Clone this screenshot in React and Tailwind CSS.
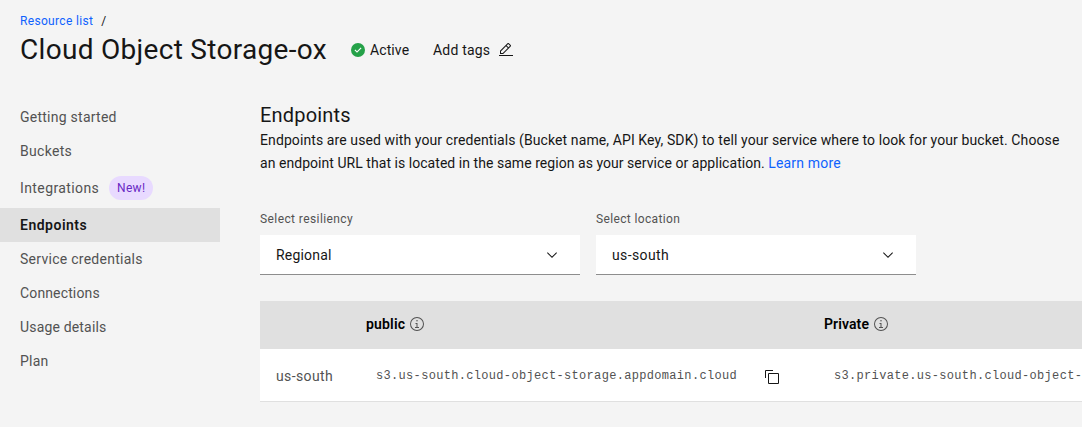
function InfoIcon() {
  return (
    <svg className="size-4 shrink-0" viewBox="0 0 32 32" fill="#525252">
      <path d="M17 22v-8h-4v2h2v6h-3v2h8v-2zM16 8a1.5 1.5 0 1 0 1.5 1.5A1.5 1.5 0 0 0 16 8z" />
      <path d="M16 30a14 14 0 1 1 14-14 14 14 0 0 1-14 14zm0-26a12 12 0 1 0 12 12A12 12 0 0 0 16 4z" />
    </svg>
  );
}

function EditIcon() {
  return (
    <svg className="size-4 shrink-0" viewBox="0 0 32 32" fill="#161616">
      <path d="M2 26h28v2H2zM25.4 9c.8-.8.8-2 0-2.8l-3.6-3.6c-.8-.8-2-.8-2.8 0l-15 15V24h6.4l15-15zm-5-5L24 7.6l-3 3L17.4 7l3-3zM6 22v-3.6l10-10 3.6 3.6-10 10H6z" />
    </svg>
  );
}

function CheckIcon() {
  return (
    <svg className="size-4 shrink-0" viewBox="0 0 16 16">
      <circle cx="8" cy="8" r="7" fill="#24a148" />
      <path d="M7 10.8 4.5 8.3l.8-.8L7 9.2l3.7-3.7.8.8z" fill="#fff" />
    </svg>
  );
}

function CopyIcon() {
  return (
    <svg className="size-4 shrink-0" viewBox="0 0 16 16" fill="none" stroke="#161616">
      <path d="M4.5 4.5h10v10h-10z" />
      <path d="M1.5 9V1.5H9" />
    </svg>
  );
}

function ChevronIcon() {
  return (
    <svg className="size-4 shrink-0" viewBox="0 0 16 16" fill="#161616">
      <path d="M8 11 3 6l.7-.7L8 9.6l4.3-4.3.7.7z" />
    </svg>
  );
}

const navItems = [
  { label: "Getting started", tracking: "tracking-[0.25px]" },
  { label: "Buckets", tracking: "tracking-[0.3px]" },
  { label: "Integrations", tracking: "tracking-[0.4px]", badge: "New!" },
  { label: "Endpoints", tracking: "tracking-[0.5px]", active: true },
  { label: "Service credentials", tracking: "tracking-[0.27px]" },
  { label: "Connections", tracking: "tracking-[0.14px]" },
  { label: "Usage details", tracking: "tracking-[0.17px]" },
  { label: "Plan", tracking: "tracking-[0.2px]" },
];

function SideNav() {
  return (
    <nav className="w-[220px] shrink-0 text-sm text-[#525252]">
      {navItems.map(({ label, tracking, badge, active }) => (
        <a
          key={label}
          className={`flex items-center pl-5 ${badge ? "h-10" : "h-[34px]"} ${
            active ? "bg-[#e0e0e0] font-semibold text-[#161616]" : ""
          }`}
        >
          <span className={tracking}>{label}</span>
          {badge && (
            <span className="ml-2.5 flex h-6 w-11 items-center justify-center rounded-full bg-[#e8daff] text-xs tracking-[0.37px] text-[#6929c4]">
              {badge}
            </span>
          )}
        </a>
      ))}
    </nav>
  );
}

function SelectField({ label, value, labelTracking, valueTracking }) {
  return (
    <div className="w-80">
      <div className={`mb-2 h-4 text-xs leading-4 text-[#525252] ${labelTracking}`}>{label}</div>
      <div className="flex h-10 items-center justify-between border-b border-[#8d8d8d] bg-white pr-5 pl-4 text-sm">
        <span className={valueTracking}>{value}</span>
        <ChevronIcon />
      </div>
    </div>
  );
}

function EndpointTable() {
  const columns = "grid grid-cols-[106px_458px_500px] items-center";
  const mono = "font-['Liberation_Mono',monospace] text-xs tracking-[0.32px] whitespace-nowrap";
  return (
    <div className="mt-[26px] w-[1064px] text-sm">
      <div className={`${columns} h-12 bg-[#e0e0e0] font-semibold text-black`}>
        <span />
        <span className="flex items-center gap-1 pb-0.5">
          <span className="tracking-[0.17px]">public</span>
          <InfoIcon />
        </span>
        <span className="flex items-center gap-1 pb-0.5">
          <span className="tracking-[0.1px]">Private</span>
          <InfoIcon />
        </span>
      </div>
      <div className={`${columns} h-[53px] border-b border-[#e0e0e0] bg-white text-[#525252]`}>
        <span className="pt-0.5 pl-4 tracking-[0.38px]">us-south</span>
        <span className="flex items-center pl-2.5">
          <span className={`${mono} w-[388px] pt-0.5`}>s3.us-south.cloud-object-storage.appdomain.cloud</span>
          <span className="mt-1">
            <CopyIcon />
          </span>
        </span>
        <span className={`${mono} pt-0.5 pl-2.5`}>s3.private.us-south.cloud-object-storage.appdomain.cloud</span>
      </div>
    </div>
  );
}

export default function App() {
  return (
    <div className="h-[427px] overflow-hidden bg-[#f4f4f4] font-['Roboto','Liberation_Sans',sans-serif] text-[#161616]">
      <header className="h-[100px] pt-3 pl-5">
        <div className="flex h-[18px] items-center gap-2 text-xs">
          <a className="tracking-[0.33px] text-[#0f62fe]">Resource list</a>
          <span>/</span>
        </div>
        <div className="flex h-10 items-center">
          <h1 className="w-[330px] text-[28px] leading-10 tracking-[0.3px]">Cloud Object Storage-ox</h1>
          <span className="flex w-[83px] items-center gap-1 text-sm tracking-[0.1px]">
            <CheckIcon />
            Active
          </span>
          <span className="flex items-center gap-2 text-sm tracking-[0.2px]">
            Add tags
            <EditIcon />
          </span>
        </div>
      </header>
      <div className="flex">
        <SideNav />
        <main className="w-[822px] shrink-0 pl-10">
          <h2 className="pt-0.5 text-xl leading-[27px] tracking-[0.18px]">Endpoints</h2>
          <p className="text-sm leading-[23px] whitespace-nowrap">
            <span className="block tracking-[0.1px]">
              Endpoints are used with your credentials (Bucket name, API Key, SDK) to tell your service where to look for your bucket. Choose
            </span>
            <span className="tracking-[0.045px]">
              an endpoint URL that is located in the same region as your service or application.{" "}
            </span>
            <a className="tracking-[0.17px] text-[#0f62fe]">Learn more</a>
          </p>
          <div className="mt-9 flex gap-4">
            <SelectField
              label="Select resiliency"
              value="Regional"
              labelTracking="tracking-[0.41px]"
              valueTracking="tracking-[0.2px]"
            />
            <SelectField
              label="Select location"
              value="us-south"
              labelTracking="tracking-[0.36px]"
              valueTracking="tracking-[0.38px]"
            />
          </div>
          <EndpointTable />
        </main>
      </div>
    </div>
  );
}
